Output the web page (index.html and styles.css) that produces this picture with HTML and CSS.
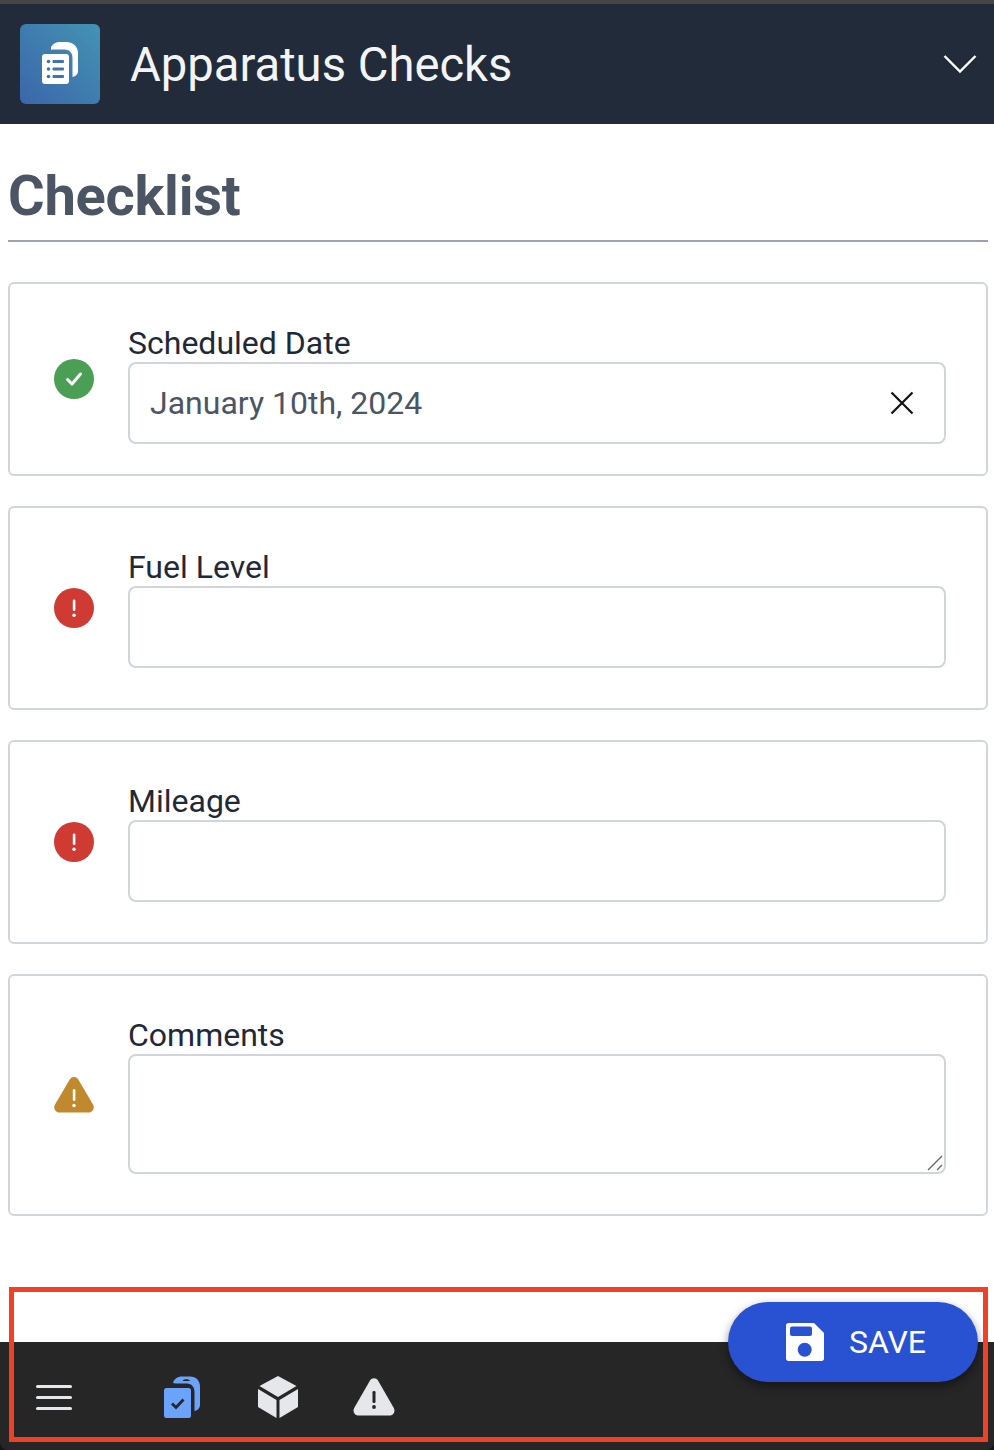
FILE: index.html
```html
<!DOCTYPE html>
<html lang="en">
<head>
  <meta charset="UTF-8">
  <title>Apparatus Checks</title>
  <link rel="stylesheet" href="styles.css">
</head>
<body>
  <div class="app">
    <div class="header">
      <div class="logo">
        <svg width="36" height="42" viewBox="0 0 36 42">
          <path fill="#fff" d="M9 5C11 1.500 14 0 18 0h6c7 0 12 4.500 12 11v18c0 3-2.500 5.500-5.500 6V16c0-5-3-8.500-8-8.500H12c-1.200 0-2.200 0-3 .5z"/>
          <rect fill="#fff" x="0" y="12" width="27" height="30" rx="3"/>
          <g fill="#3f74ad">
            <circle cx="6.500" cy="19.500" r="1.800"/>
            <circle cx="6.500" cy="27" r="1.800"/>
            <circle cx="6.500" cy="34.500" r="1.800"/>
            <rect x="10.500" y="18" width="11.500" height="3" rx="1"/>
            <rect x="10.500" y="25.500" width="11.500" height="3" rx="1"/>
            <rect x="10.500" y="33" width="11.500" height="3" rx="1"/>
          </g>
        </svg>
      </div>
      <div class="app-title">Apparatus Checks</div>
      <svg class="chevron" width="34" height="20" viewBox="0 0 34 20">
        <path d="M1.500 2 17 17.500 32.500 2" fill="none" stroke="#fff" stroke-width="2.400"/>
      </svg>
    </div>

    <div class="content">
      <h1 class="page-title">Checklist</h1>

      <div class="card card-compact">
        <div class="status">
          <svg width="40" height="40" viewBox="0 0 40 40">
            <circle cx="20" cy="20" r="20" fill="#4a9f55"/>
            <path d="M13.500 20.500 18 25l8.500-10" fill="none" stroke="#fff" stroke-width="3" stroke-linecap="round" stroke-linejoin="round"/>
          </svg>
        </div>
        <div class="field">
          <label class="field-label">Scheduled Date</label>
          <div class="input">
            <span class="input-value">January 10th, 2024</span>
            <svg width="24" height="24" viewBox="0 0 24 24">
              <path d="M1.500 1.500l21 21M22.500 1.500l-21 21" fill="none" stroke="#111" stroke-width="2.200"/>
            </svg>
          </div>
        </div>
      </div>

      <div class="card">
        <div class="status">
          <svg width="40" height="40" viewBox="0 0 40 40">
            <circle cx="20" cy="20" r="20" fill="#cf3a33"/>
            <rect x="18.800" y="11.500" width="2.600" height="11.500" rx="1.300" fill="#fff"/>
            <circle cx="20" cy="27.200" r="1.700" fill="#fff"/>
          </svg>
        </div>
        <div class="field">
          <label class="field-label">Fuel Level</label>
          <div class="input"></div>
        </div>
      </div>

      <div class="card">
        <div class="status">
          <svg width="40" height="40" viewBox="0 0 40 40">
            <circle cx="20" cy="20" r="20" fill="#cf3a33"/>
            <rect x="18.800" y="11.500" width="2.600" height="11.500" rx="1.300" fill="#fff"/>
            <circle cx="20" cy="27.200" r="1.700" fill="#fff"/>
          </svg>
        </div>
        <div class="field">
          <label class="field-label">Mileage</label>
          <div class="input"></div>
        </div>
      </div>

      <div class="card">
        <div class="status">
          <svg width="40" height="36" viewBox="0 0 40 36">
            <path fill="#c0892e" d="M15.700 2.500c2-3.300 6.600-3.300 8.600 0l14.700 25c2 3.500-.4 8-4.300 8H5.300c-3.900 0-6.300-4.500-4.300-8z"/>
            <rect x="18.800" y="12" width="2.600" height="12" rx="1.300" fill="#fff"/>
            <circle cx="20" cy="28.500" r="1.700" fill="#fff"/>
          </svg>
        </div>
        <div class="field">
          <label class="field-label">Comments</label>
          <div class="input textarea">
            <svg class="grip" width="16" height="16" viewBox="0 0 16 16">
              <path d="M1 15 15 1M10 15l5-5" fill="none" stroke="#666" stroke-width="1.400"/>
            </svg>
          </div>
        </div>
      </div>
    </div>

    <div class="nav-frame">
      <div class="bottom-nav">
        <div class="menu-btn"><span></span><span></span><span></span></div>
        <div class="nav-icons">
          <svg width="36" height="42" viewBox="0 0 36 42">
            <path fill="#6ba3fb" fill-rule="evenodd" d="M9 7C10 3 13.500.5 18 .5h8c6 0 10 4 10 10V29c0 3-2.500 5.500-5.500 6V16c0-5-3-8.500-7.500-8.500H12c-1.200 0-2.200-.2-3-.5zM19 4.200c1.500-1.200 5-1.200 6.500 0 .4.500 0 .8-.5.800h-5.500c-.6 0-.9-.4-.5-.8z"/>
            <rect fill="#6ba3fb" x="0" y="12" width="27" height="30" rx="2.500"/>
            <path d="M8 27.500l4 4 7.500-8" fill="none" stroke="#262626" stroke-width="2.800"/>
          </svg>
          <svg class="cube" width="40" height="42" viewBox="0 0 40 42">
            <path fill="#e5e7eb" d="M20 0 38.500 10 20 21 1.500 10z"/>
            <path fill="#e5e7eb" d="M0 13 18.500 24V42L0 31z"/>
            <path fill="#e5e7eb" d="M40 13 21.500 24V42L40 31z"/>
          </svg>
          <svg width="42" height="38" viewBox="0 0 42 38">
            <path fill="#e5e7eb" d="M17 2.500c1.800-3 6.200-3 8 0l15.800 27.500c1.800 3.200-.4 7.500-4 7.500H5.200c-3.600 0-5.800-4.300-4-7.500z"/>
            <rect x="19.500" y="13" width="3" height="12" rx="1.200" fill="#262626"/>
            <circle cx="21" cy="29" r="1.900" fill="#262626"/>
          </svg>
        </div>
      </div>
    </div>

    <button class="save-btn">
      <svg width="38" height="38" viewBox="0 0 38 38">
        <path fill="#fff" d="M2.500 0H28l10 10v25.500c0 1.400-1.100 2.500-2.500 2.500h-33C1.100 38 0 36.900 0 35.500v-33C0 1.100 1.100 0 2.500 0z"/>
        <rect x="4" y="3.500" width="22" height="9.500" rx="2" fill="#2952d3"/>
        <circle cx="18.700" cy="26.700" r="7" fill="#2952d3"/>
      </svg>
      <span>SAVE</span>
    </button>

    <div class="highlight"></div>
  </div>
</body>
</html>
```

FILE: styles.css
```css
* {
  margin: 0;
  padding: 0;
  box-sizing: border-box;
}

body {
  font-family: Roboto, sans-serif;
  background: #fff;
}

.app {
  position: relative;
  display: flex;
  flex-direction: column;
  width: 994px;
  height: 1450px;
  overflow: hidden;
}

.header {
  display: flex;
  align-items: center;
  height: 124px;
  padding: 0 17px 0 20px;
  background: #222b39;
  border-top: 4px solid #454545;
}

.logo {
  display: flex;
  align-items: center;
  justify-content: center;
  width: 80px;
  height: 80px;
  padding-bottom: 2px;
  border-radius: 6px;
  background: linear-gradient(45deg, #3b66aa 0%, #4393b3 100%);
}

.app-title {
  margin-left: 30px;
  padding-top: 2px;
  font-size: 47.2px;
  color: #f3f4f6;
}

.chevron {
  margin-left: auto;
}

.content {
  flex: 1;
  padding: 0 6px 0 8px;
}

.page-title {
  height: 118px;
  padding-top: 36px;
  margin-bottom: 40px;
  font-size: 56px;
  line-height: 72px;
  letter-spacing: -0.25px;
  font-weight: 700;
  color: #4b5563;
  border-bottom: 2px solid #9ca3af;
}

.card {
  display: flex;
  align-items: center;
  padding-right: 40px;
  margin-bottom: 30px;
  border: 2px solid #d1d5db;
  border-radius: 6px;
}

.status {
  display: flex;
  justify-content: center;
  flex: none;
  width: 118px;
  padding-left: 10px;
}

.field {
  flex: 1;
  padding: 46px 0 40px;
}

.card-compact .field {
  padding-bottom: 30px;
}

.field-label {
  display: block;
  height: 32px;
  font-size: 32px;
  line-height: 26px;
  color: #1f2937;
}

.input {
  display: flex;
  align-items: center;
  justify-content: space-between;
  height: 82px;
  padding: 0 30px 0 20px;
  border: 2px solid #d1d5db;
  border-radius: 8px;
}

.input-value {
  font-size: 32px;
  color: #4b5563;
}

.textarea {
  position: relative;
  height: 120px;
}

.grip {
  position: absolute;
  right: 1px;
  bottom: 1px;
}

.nav-frame {
  flex: none;
  background: #10141c;
}

.bottom-nav {
  display: flex;
  align-items: center;
  height: 108px;
  padding: 2px 0 0 36px;
  border-radius: 0 0 8px 8px;
  background: #262626;
}

.menu-btn {
  display: flex;
  flex-direction: column;
  gap: 8px;
  width: 36px;
}

.menu-btn span {
  height: 3px;
  border-radius: 2px;
  background: #e5e7eb;
}

.nav-icons {
  display: flex;
  align-items: center;
  gap: 58px;
  margin-left: 92px;
}

.cube {
  margin-right: -3px;
}

.save-btn {
  position: absolute;
  left: 728px;
  top: 1302px;
  display: flex;
  align-items: center;
  justify-content: center;
  gap: 25px;
  width: 250px;
  height: 80px;
  padding-left: 6px;
  border: none;
  border-radius: 40px;
  font-family: Roboto, sans-serif;
  font-size: 32px;
  font-weight: 400;
  color: #fff;
  background: #2952d3;
  box-shadow: 0 4px 10px rgba(0, 0, 0, 0.45);
}

.highlight {
  position: absolute;
  left: 9px;
  top: 1287px;
  width: 979px;
  height: 155px;
  border: 5px solid #ee4127;
}
```
